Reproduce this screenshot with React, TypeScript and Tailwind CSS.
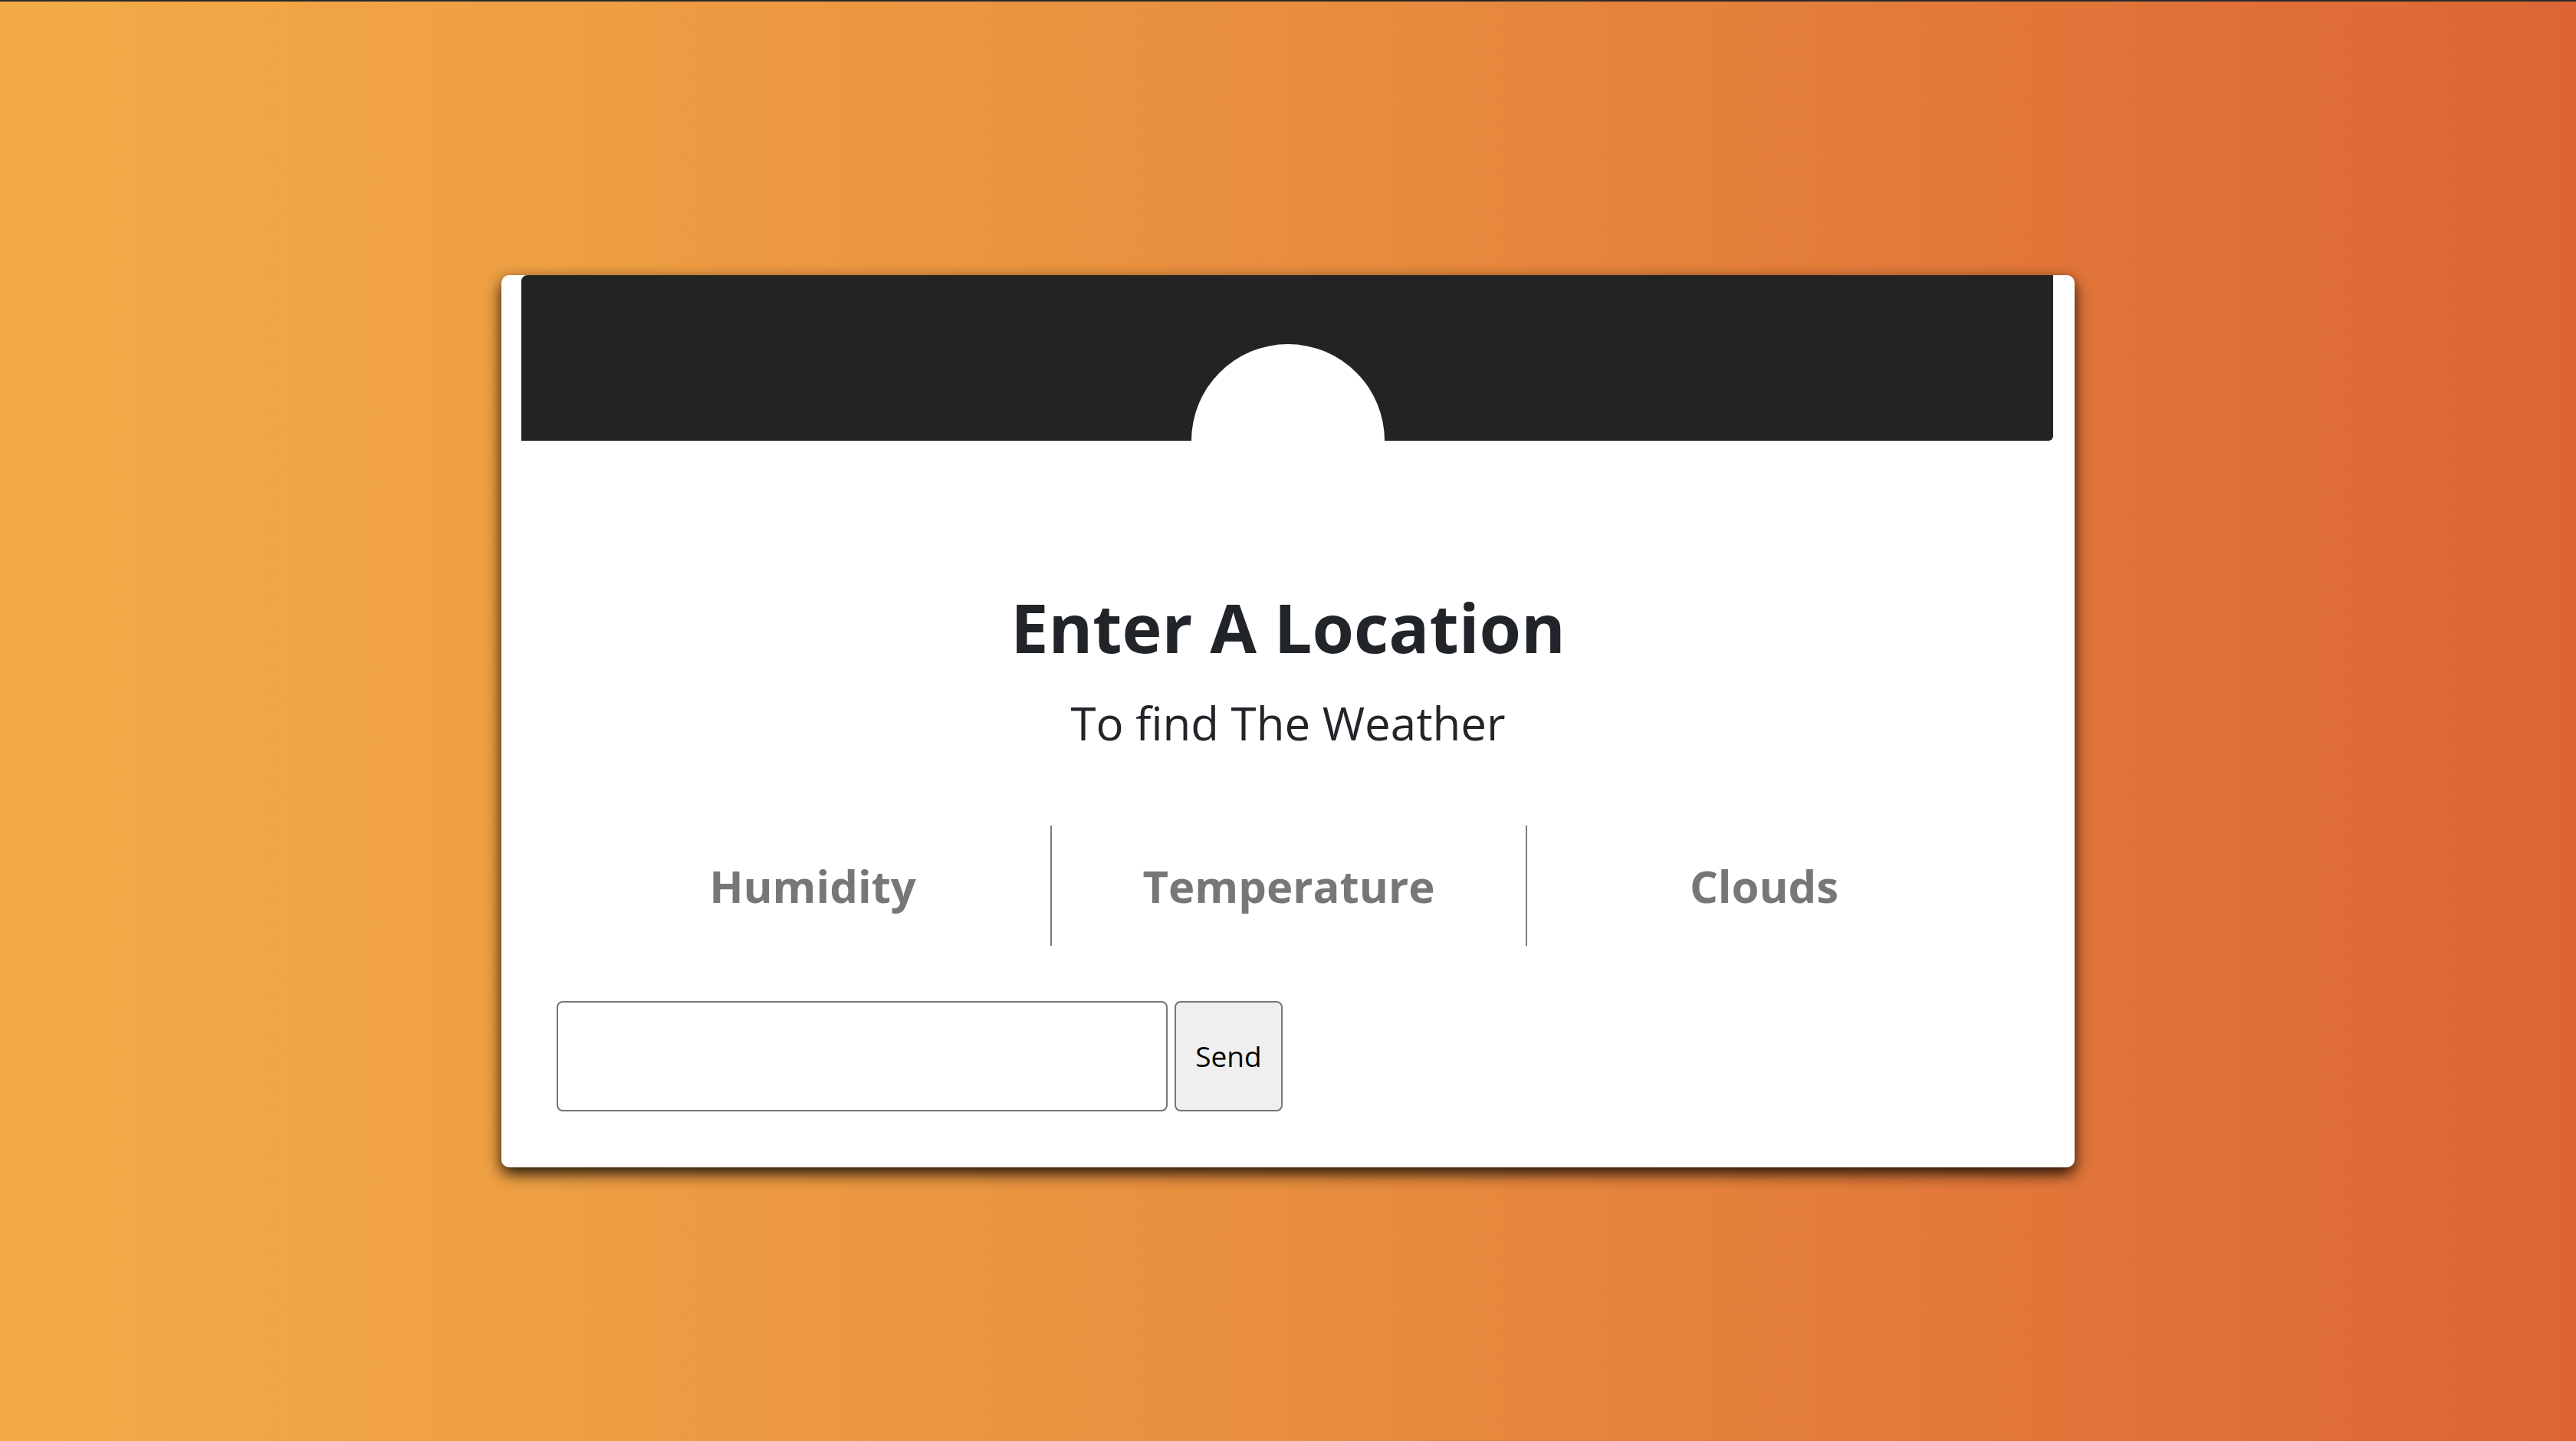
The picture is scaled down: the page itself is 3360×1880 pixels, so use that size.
import { useState } from "react";

export default function App() {
  const [city, setCity] = useState("");

  return (
    <div
      className="min-h-screen w-full flex items-center justify-center border-t-2 border-[#2a2a2a] bg-[linear-gradient(to_right,#f3ab47,#e88e3e_50%,#dd6535)]"
      style={{ fontFamily: '"Open Sans", "DejaVu Sans", sans-serif' }}
    >
      {/* card */}

      <div className="relative w-[2052px] bg-white rounded-[10px] shadow-[0_8px_20px_rgba(0,0,0,0.9)]">

        {/* dark band with the half moon */}

        <div className="ml-[26px] mr-[28px] h-[216px] bg-[#232323] rounded-tl-[8px] rounded-br-[6px]" />

        <div className="absolute left-1/2 top-[90px] -translate-x-1/2 w-[252px] h-[252px] rounded-full bg-white" />

        <div className="relative px-[72px] pb-[73px]">

          <h1 className="mt-[199px] text-center text-[88px] leading-[88px] font-bold text-[#212529]">
            Enter A Location
          </h1>

          <p className="mt-[51px] text-center text-[60px] leading-[60px] text-[#212529]">
            To find The Weather
          </p>

          {/* stats */}

          <div className="mt-[104px] mx-auto w-[1860px] grid grid-cols-3">
            <div className="h-[157px] flex items-center justify-center text-[58px] leading-none font-bold text-[#777777]">
              Humidity
            </div>
            <div className="h-[157px] flex items-center justify-center border-l-2 border-[#7a7a7a] text-[58px] leading-none font-bold text-[#777777]">
              Temperature
            </div>
            <div className="h-[157px] flex items-center justify-center border-l-2 border-[#7a7a7a] text-[58px] leading-none font-bold text-[#777777]">
              Clouds
            </div>
          </div>

          {/* form */}

          <div className="mt-[72px] flex gap-[9px]">
            <input
              value={city}
              onChange={(e) => setCity(e.target.value)}
              className="w-[797px] h-[144px] px-4 text-[37px] border-2 border-[#767676] rounded-[8px] bg-white outline-none"
            />
            <button className="w-[141px] h-[144px] bg-[#efefef] border-2 border-[#767676] rounded-[8px] text-[37px] text-black">
              Send
            </button>
          </div>

        </div>
      </div>
    </div>
  );
}
